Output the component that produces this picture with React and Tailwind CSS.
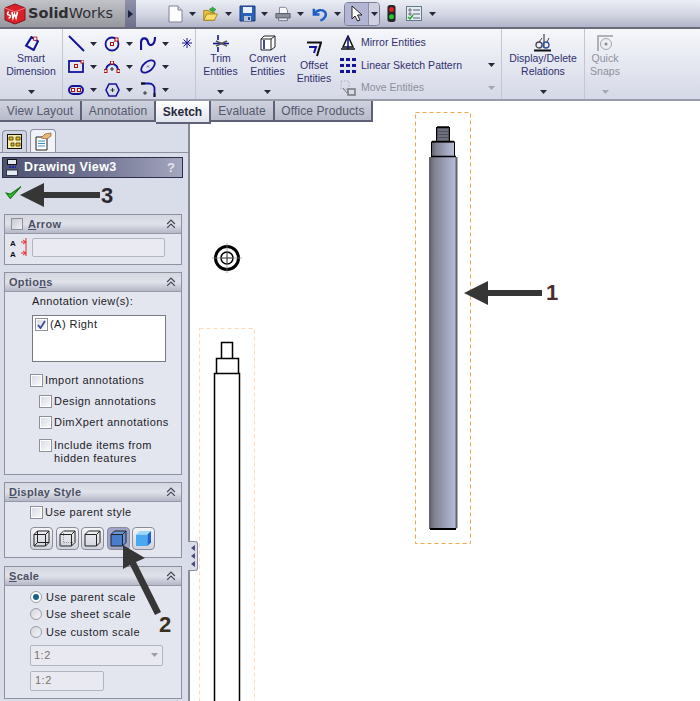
import { useId } from "react";

const font = "font-['Liberation_Sans',sans-serif]";

function Caret({ gray, className = "" }) {
  return (
    <svg width="7" height="4" viewBox="0 0 7 4" className={`shrink-0 ${className}`}>
      <path d="M0 0h7L3.5 4z" fill={gray ? "#a4a6b0" : "#26283c"} />
    </svg>
  );
}

function RibbonButton({ icon, lines, width, gray, caret = true, textTop = "-mt-[1px]" }) {
  return (
    <div className={`relative flex flex-col items-center h-full shrink-0 ${width}`}>
      <div className="h-[20px] mt-[4px] flex items-center justify-center">{icon}</div>
      <div className={`${textTop} text-center text-[10.5px] leading-[13px] whitespace-nowrap ${gray ? "text-[#8e909c]" : "text-[#2f3070]"}`}>
        {lines.map((l) => (
          <div key={l}>{l}</div>
        ))}
      </div>
      {caret && <Caret gray={gray} className="absolute top-[61px]" />}
    </div>
  );
}

function Tool({ children }) {
  return (
    <div className="flex items-center w-[36px] gap-[5px] h-[23px]">
      <div className="w-[18px] h-[18px] flex items-center justify-center">{children}</div>
      <Caret />
    </div>
  );
}

const blue = "#14149a";
const red = "#b01010";

const Handle = ({ x, y }) => <rect x={x} y={y} width="3" height="3" fill="#fff" stroke={red} strokeWidth="1" />;

function TopBar() {
  return (
    <div className="flex h-[29px] items-center bg-gradient-to-b from-[#eceef5] via-[#d5d8e4] to-[#b2b5c8] border-b-2 border-[#6a6c7c]">
      <div className="flex items-center h-full w-[125px] pl-[3px] gap-[1px] bg-gradient-to-b from-[#c2c3c8] to-[#97989f]">
        <svg width="24" height="22" viewBox="0 0 24 22">
          <path d="M2 5l10-4 10 4v12l-10 4-10-4z" fill="#d8222a" stroke="#8a1015" />
          <path d="M2 5l10 4 10-4" fill="none" stroke="#f08088" />
          <path d="M6 9c-2 0-2 3 0 3s2 3-.5 3M9 9l1 6 1.500-4 1.500 4 1.500-6" fill="none" stroke="#fff" strokeWidth="1.600" />
        </svg>
        <span className="font-['DejaVu_Sans',sans-serif] text-[14.5px] text-[#2e2e33] leading-none whitespace-nowrap">
          <b>Solid</b>Works
        </span>
      </div>
      <div className="w-[11px] h-full flex items-center justify-center bg-gradient-to-b from-[#8f90aa] to-[#6d6f8c]">
        <svg width="5" height="8" viewBox="0 0 5 8"><path d="M0 0l5 4-5 4z" fill="#1d2140" /></svg>
      </div>
      <div className="flex items-center ml-[32px] h-full">
        <svg width="15" height="18" viewBox="0 0 15 18"><path d="M1 1h9l4 4v12H1z" fill="#fdfdfd" stroke="#7d8296" /><path d="M10 1v4h4" fill="#d8dce8" stroke="#7d8296" /></svg>
        <Caret className="ml-[6px]" />
        <svg width="16" height="16" viewBox="0 0 21 18" preserveAspectRatio="none" className="ml-[7px]"><path d="M1 5h6l2 2h6v9H1z" fill="#e8c23c" stroke="#9a7a14" /><path d="M1 16l4-7h14l-4 7z" fill="#f8de70" stroke="#9a7a14" /><path d="M12 1l5 3-5 3V5H9V3h3z" fill="#3ab83a" stroke="#1c7a1c" strokeWidth=".7" /></svg>
        <Caret className="ml-[6px]" />
        <svg width="17" height="17" viewBox="0 0 17 17" className="ml-[7px]"><path d="M1 1h15v15H1z" fill="#2a62b8" stroke="#163a80" /><path d="M4 2h9v6H4z" fill="#e8f0fa" /><path d="M5 11h7v5H5z" fill="#b8c4d8" /><path d="M9 12h2v3H9z" fill="#24508f" /></svg>
        <Caret className="ml-[5px]" />
        <svg width="16" height="16" viewBox="0 0 18 17" className="ml-[7px]"><path d="M5 1h7l2 3v4H5z" fill="#f8f8fa" stroke="#7a7e8c" /><path d="M1 8h16v5H1z" fill="#8a8f9c" stroke="#555864" /><path d="M4 13h10v3H4z" fill="#e8e8ee" stroke="#6a6e7a" /></svg>
        <Caret className="ml-[6px]" />
        <svg width="17" height="16" viewBox="0 0 18 17" className="ml-[7px]"><path d="M3 3v6h6M3.500 8.500C6 4 12 3 15 6.500c2 3-.5 7.500-5 9" fill="none" stroke="#1c5cc8" strokeWidth="2.600" /></svg>
        <Caret className="ml-[6px]" />
        <div className="flex ml-[3px] h-[24px] w-[36px] rounded-[4px] border border-[#7c7e98] overflow-hidden">
          <div className="w-[23px] bg-[#b2b5d4] flex items-center justify-center">
            <svg width="12" height="17" viewBox="0 0 12 17"><path d="M1 1v13l3-3 2.500 5 2.500-1-2.500-5H11z" fill="#fff" stroke="#222" /></svg>
          </div>
          <div className="flex-1 bg-[#cfd1e2] border-l border-[#8c8ea6] flex items-center justify-center"><Caret /></div>
        </div>
        <svg width="9" height="17" viewBox="0 0 9 19" className="ml-[7px]"><rect width="9" height="19" rx="3" fill="#24262a" /><circle cx="4.500" cy="5" r="2.800" fill="#e02424" /><circle cx="4.500" cy="13" r="2.800" fill="#2cc42c" /></svg>
        <svg width="16" height="15" viewBox="0 0 16 15" className="ml-[10px]"><rect x=".5" y=".5" width="15" height="14" fill="#e4ecf4" stroke="#64788c" /><path d="M3 3h2v2H3zM3 7h2v2H3z" fill="none" stroke="#555" strokeWidth=".8" /><path d="M7 4h7M7 8h7M7 12h7" stroke="#56606c" /><path d="M2 11l2 2 3-4" fill="none" stroke="#22a022" strokeWidth="1.400" /></svg>
        <Caret className="ml-[7px]" />
      </div>
    </div>
  );
}

function Ribbon() {
  return (
    <div className={`flex h-[72px] bg-gradient-to-b from-[#f6f7fb] to-[#d5d8e6] border-b-2 border-[#9a9caa] ${font}`}>
      <RibbonButton
        width="w-[62px]"
        lines={["Smart", "Dimension"]}
        icon={<svg width="15" height="15" viewBox="0 0 14 14"><path d="M7 1l6 4-4 8-7-4z" fill="none" stroke={blue} strokeWidth="2" /><rect x="9" y="1" width="3" height="3" fill="#fff" stroke={red} strokeWidth=".8" /></svg>}
      />
      <div className="w-[133px] border-l border-[#c4c6d4] pl-[4px] pt-[3px] shrink-0 flex">
        <div className="grid grid-cols-3 gap-x-0 w-[108px]">
          <Tool><svg width="17" height="17" viewBox="0 0 17 17"><path d="M1 1l15 15" stroke={blue} strokeWidth="2" /></svg></Tool>
          <Tool><svg width="16" height="16" viewBox="0 0 16 16"><circle cx="8" cy="8" r="6.500" fill="none" stroke={blue} strokeWidth="1.800" /><path d="M8 8l4-4" stroke="#555" strokeWidth=".7" /><Handle x="6.500" y="6.500" /><Handle x="11" y="2" /></svg></Tool>
          <Tool><svg width="17" height="15" viewBox="0 0 17 15"><path d="M1 14V7c0-6 6-6 7-1s7 4 7-5" fill="none" stroke={blue} strokeWidth="2.200" /></svg></Tool>
          <Tool><svg width="16" height="13" viewBox="0 0 16 13"><rect x="1" y="1" width="14" height="11" fill="none" stroke={blue} strokeWidth="1.800" /><Handle x="6.500" y="4.500" /><Handle x="13" y="0" /></svg></Tool>
          <Tool><svg width="16" height="12" viewBox="0 0 16 12"><path d="M2 9a6 6 0 0 1 12 0" fill="none" stroke={blue} strokeWidth="1.800" /><path d="M8 6v4M6 8h4" stroke="#333" /><Handle x="0" y="8.500" /><Handle x="13" y="8.500" /><Handle x="6.500" y="0" /></svg></Tool>
          <Tool><svg width="16" height="15" viewBox="0 0 16 15"><ellipse cx="8" cy="7.500" rx="8" ry="4.500" transform="rotate(-40 8 7.500)" fill="none" stroke={blue} strokeWidth="1.800" /><path d="M7 6.500l2 2m0-2l-2 2" stroke="#444" strokeWidth=".7" /></svg></Tool>
          <Tool><svg width="16" height="10" viewBox="0 0 16 10"><rect x="1" y="1" width="14" height="8" rx="4" fill="none" stroke={blue} strokeWidth="2" /><Handle x="3.500" y="3.500" /><Handle x="9.500" y="3.500" /></svg></Tool>
          <Tool><svg width="15" height="14" viewBox="0 0 15 14"><path d="M4 1h7l3 6-3 6H4L1 7z" fill="none" stroke={blue} strokeWidth="1.600" /><path d="M7.500 5v4M5.500 7h4" stroke="#333" /></svg></Tool>
          <Tool><svg width="16" height="15" viewBox="0 0 16 15"><path d="M1 1.500h8c3.500 0 5.500 2.500 5.500 5.500v8" fill="none" stroke={blue} strokeWidth="1.800" /><path d="M1 1.500h4M14.500 11v4" stroke="#111" strokeWidth="1.800" /><path d="M5 9v4M3 11h4" stroke="#333" /></svg></Tool>
        </div>
        <svg width="10" height="10" viewBox="0 0 10 10" className="ml-[7px] mt-[6px]"><path d="M5 0v10M0 5h10M1.500 1.500l7 7m0-7l-7 7" stroke={blue} /></svg>
      </div>
      <div className="w-[306px] border-l border-[#c4c6d4] shrink-0 flex">
        <RibbonButton
          width="w-[49px]"
          lines={["Trim", "Entities"]}
          icon={<svg width="16" height="17" viewBox="0 0 16 17"><path d="M0 8.500h16" stroke={blue} strokeWidth="1.600" /><path d="M5 0v5M5 12v5" stroke={blue} strokeWidth="1.600" /><path d="M3 6l11 5M3 11l11-5" stroke="#555" strokeWidth="1.400" /></svg>}
        />
        <RibbonButton
          width="w-[45px]"
          lines={["Convert", "Entities"]}
          icon={<svg width="16" height="16" viewBox="0 0 16 16"><path d="M1 4h10v11H1zM1 4l3-3h11v11l-4 3M11 4l4-3" fill="#fff" stroke="#222" /><path d="M4 5v9" stroke={blue} strokeWidth="1.600" /></svg>}
        />
        <RibbonButton
          width="w-[48px]"
          caret={false}
          textTop="mt-[6px]"
          lines={["Offset", "Entities"]}
          icon={<svg width="16" height="16" className="mt-[12px]" viewBox="0 0 16 16"><path d="M1 1.500h14L11 15" fill="none" stroke="#111" strokeWidth="2" /><path d="M3 6h7L8 12" fill="none" stroke={blue} strokeWidth="2" /></svg>}
        />
        <div className="flex flex-col pt-[3px] pl-[2px] text-[10.5px] text-[#2f3070] w-[155px] shrink-0">
          <div className="flex items-center h-[23px] gap-[5px]">
            <svg width="16" height="16" viewBox="0 0 16 16"><path d="M8 1l5 11H3z" fill="#fff" stroke="#111" strokeWidth="1.500" /><path d="M8 1v13" stroke={blue} strokeWidth="1.600" /><path d="M1 14h14" stroke="#111" strokeWidth="1.500" /></svg>
            <span className="whitespace-nowrap">Mirror Entities</span>
          </div>
          <div className="flex items-center h-[23px] gap-[5px] relative">
            <svg width="16" height="15" viewBox="0 0 16 15" fill={blue}><path d="M0 0h4v3H0zM6 0h4v3H6zM12 0h4v3h-4zM0 6h4v3H0zM6 6h4v3H6zM12 6h4v3h-4zM0 12h4v3H0zM6 12h4v3H6zM12 12h4v3h-4z" /></svg>
            <span className="whitespace-nowrap">Linear Sketch Pattern</span>
            <Caret className="absolute left-[148px]" />
          </div>
          <div className="flex items-center h-[23px] gap-[5px] relative text-[#8e909c]">
            <svg width="16" height="16" viewBox="0 0 16 16"><path d="M1 1h8v8H1z" fill="none" stroke="#a8aab4" strokeDasharray="1.500 1.500" /><path d="M3 8l4 5" stroke="#777" /><path d="M8 9h7v6H8z" fill="none" stroke="#777" strokeWidth="1.500" /></svg>
            <span className="whitespace-nowrap">Move Entities</span>
            <Caret gray className="absolute left-[148px]" />
          </div>
        </div>
      </div>
      <div className="w-[83px] border-l border-[#c4c6d4] shrink-0">
        <RibbonButton
          width="w-full"
          lines={["Display/Delete", "Relations"]}
          icon={<svg width="18" height="18" viewBox="0 0 18 18"><path d="M0 16.500h17" stroke="#111" strokeWidth="2" /><path d="M10 0v14" stroke="#222" /><circle cx="5" cy="11" r="3" fill="none" stroke="#445" strokeWidth="1.300" /><circle cx="12" cy="11" r="3" fill="none" stroke="#3050a0" strokeWidth="1.300" /><path d="M5 8l3-4M13 8l2-4" stroke="#444" /></svg>}
        />
      </div>
      <div className="w-[41px] border-l border-[#c4c6d4] shrink-0">
        <RibbonButton
          width="w-full"
          gray
          lines={["Quick", "Snaps"]}
          icon={<svg width="17" height="17" viewBox="0 0 17 17"><path d="M1 16V1h15" fill="none" stroke="#9a9ca6" strokeWidth="1.500" /><circle cx="9" cy="9" r="5.500" fill="#eceef2" stroke="#a4a6b0" /><circle cx="9" cy="9" r="1.500" fill="#888a94" /></svg>}
        />
      </div>
    </div>
  );
}

function Tabs() {
  const tab = "h-[21px] flex items-center justify-center bg-gradient-to-b from-[#cfd2df] to-[#b8bbca] border-r-2 border-b-2 border-[#5f6276] text-[12px] text-[#55586c] tracking-[0.1px] shrink-0";
  return (
    <div className={`absolute left-0 top-[101px] flex h-[23px] ${font}`}>
      <div className={`${tab} w-[82px]`}>View Layout</div>
      <div className={`${tab} w-[74px]`}>Annotation</div>
      <div className="h-[23px] w-[55px] flex items-center justify-center bg-gradient-to-b from-[#ffffff] to-[#e2e4ee] border-r-2 border-b-2 border-[#5f6276] text-[12px] font-bold text-[#26283c] shrink-0">Sketch</div>
      <div className={`${tab} w-[64px]`}>Evaluate</div>
      <div className={`${tab} w-[98px]`}>Office Products</div>
    </div>
  );
}

function Check({ label, checked, className = "", top = false }) {
  return (
    <div className={`flex ${top ? "items-start" : "items-center"} gap-[2px] ${className}`}>
      <span className="w-[13px] h-[13px] shrink-0 border border-[#8d8f99] bg-gradient-to-br from-[#d8dae2] to-[#fbfbfd] flex items-center justify-center outline outline-1 outline-offset-[-2px] outline-white">
        {checked && (
          <svg width="9" height="9" viewBox="0 0 9 9"><path d="M1 5l2.500 3L8 1" fill="none" stroke="#3a4a9a" strokeWidth="1.800" /></svg>
        )}
      </span>
      <span className="text-[11px] leading-[13px] tracking-[0.45px] text-[#1c1c28] whitespace-pre-line">{label}</span>
    </div>
  );
}

function Radio({ label, checked }) {
  return (
    <div className="flex items-center gap-[3px] h-[17.500px]">
      <span className={`w-[12px] h-[12px] rounded-full border border-[#9a9ca6] flex items-center justify-center ${checked ? "bg-white" : "bg-gradient-to-br from-[#d4d6de] to-[#f6f6fa]"}`}>
        {checked && <span className="w-[6px] h-[6px] rounded-full bg-[#16608c]" />}
      </span>
      <span className="text-[11px] tracking-[0.45px] text-[#1c1c28] whitespace-nowrap ml-[1px]">{label}</span>
    </div>
  );
}

function Group({ title, height, className = "", children, check }) {
  const first = title[0];
  const underline = title === "Options" ? null : first;
  return (
    <div className={`ml-[4px] mr-[6px] border border-[#8f919f] bg-[#e4e6ef] ${height} ${className}`}>
      <div className="h-[19px] flex items-center justify-between pl-[4px] pr-[5px] bg-gradient-to-b from-[#d4d6e0] via-[#e0e2ea] to-[#b4b7c6] border-b border-[#9597a6]">
        <div className="flex items-center gap-[5px]">
          {check && (
            <span className="w-[12px] h-[12px] ml-[2px] border border-[#8d8f99] bg-gradient-to-br from-[#c8cad4] to-[#f0f0f4]" />
          )}
          <span className="text-[11px] font-bold text-[#4c5064] tracking-[0.3px]">
            {underline ? (
              <>
                <u>{underline}</u>
                {title.slice(1)}
              </>
            ) : (
              <>
                Optio<u>n</u>s
              </>
            )}
          </span>
        </div>
        <svg width="10" height="10" viewBox="0 0 9 9"><path d="M1 4.500l3.500-3.500L8 4.500M1 8l3.500-3.500L8 8" fill="none" stroke="#444658" strokeWidth="1.100" /></svg>
      </div>
      {children}
    </div>
  );
}

function StyleBtn({ active, children }) {
  return (
    <div className={`w-[23px] h-[23px] rounded-[4px] border border-[#8a8c98] flex items-center justify-center ${active ? "bg-[#9fa4c8] border-[#6a6e90]" : "bg-gradient-to-b from-[#f4f4f8] to-[#d0d2dc]"}`}>
      {children}
    </div>
  );
}

function Panel() {
  return (
    <div className={`relative w-[190px] shrink-0 h-[600px] overflow-hidden pt-[22px] bg-[#d9dce9] border-r-2 border-[#8a8c9a] ${font}`}>
      <div className="flex items-end h-[30px] pl-[2px] gap-[3px] border-b border-[#8f919f]">
        <div className="w-[25px] h-[22px] rounded-t-[4px] border border-b-0 border-[#8f919f] bg-[#d0d3e2] flex items-center justify-center">
          <svg width="15" height="15" viewBox="0 0 15 15"><rect x=".5" y=".5" width="14" height="14" fill="#f6e9a0" stroke="#111" /><path d="M2 3h4v3H2zM9 3h4v3H9zM9 9h4v3H9zM4 9h3v3H4z" fill="#e8b818" stroke="#222" strokeWidth=".7" /></svg>
        </div>
        <div className="w-[26px] h-[23px] rounded-t-[4px] border border-b-0 border-[#8f919f] bg-[#f2f3f8] flex items-center justify-center">
          <svg width="20" height="19" viewBox="0 0 20 19"><path d="M3 5h11v13H3z" fill="#fff" stroke="#222" /><path d="M5 9h7M5 11.500h7M5 14h7" stroke="#3a8ccc" /><path d="M8 6l4-4 6-1v3l-4 3z" fill="#e8b878" stroke="#8a5a28" strokeWidth=".7" /></svg>
        </div>
      </div>
      <div className="mt-[4px] ml-[2px] mr-[5px] h-[21px] flex items-center bg-gradient-to-r from-[#4e5170] via-[#6f7290] to-[#a5a7bf] border border-[#2c2e4a] pl-[3px] pr-[7px] justify-between">
        <div className="flex items-center gap-[5px]">
          <svg width="13" height="17" viewBox="0 0 13 17"><rect x="1.500" y=".5" width="9" height="5" fill="#e4e8f0" stroke="#111" /><path d="M3 8h7" stroke="#2222aa" strokeDasharray="2 1" strokeWidth="2" /><rect x=".5" y="11" width="11" height="5.500" fill="#e4ecf8" stroke="#334" /></svg>
          <span className="text-[12.5px] font-bold text-white tracking-[0.35px]">Drawing View3</span>
        </div>
        <span className="text-[13px] font-bold text-[#e4e4ec]">?</span>
      </div>
      <div className="h-[36px] pl-[5px] pt-[7px]">
        <svg width="17" height="15" viewBox="0 0 16 13"><path d="M1 7l4 5L15 1 5 8z" fill="#32c42c" stroke="#147814" /></svg>
      </div>
      <Group title="Arrow" check height="h-[51px]">
        <div className="flex pt-[4px] pl-[5px] gap-[4px]">
          <svg width="18" height="20" viewBox="0 0 18 20"><path d="M11 4h5M11 15h5M13 2l3 2-3 2M13 13l3 2-3 2M16 0v18" fill="none" stroke="#e01818" strokeWidth=".9" /><text x="0" y="7.500" fontSize="8" fontWeight="700" fill="#111" fontFamily="Liberation Sans">A</text><text x="0" y="18.500" fontSize="8" fontWeight="700" fill="#111" fontFamily="Liberation Sans">A</text></svg>
          <div className="w-[133px] h-[19px] rounded-[2px] border border-[#b2b4c0] bg-[#eaebf2]" />
        </div>
      </Group>
      <Group title="Options" height="h-[203px]" className="mt-[7px]">
        <div className="pl-[27px] pt-[3px] text-[11px] leading-[13px] tracking-[0.4px] text-[#1c1c28]">Annotation view(s):</div>
        <div className="ml-[27px] mt-[7px] w-[134px] h-[47px] border border-[#777986] bg-white pl-[2px] pt-[2px]">
          <Check label="(A) Right" checked />
        </div>
        <Check label="Import annotations" className="ml-[25px] mt-[12px]" />
        <Check label="Design annotations" className="ml-[34px] mt-[8px]" />
        <Check label="DimXpert annotations" className="ml-[34px] mt-[8px]" />
        <Check label={"Include items from\nhidden features"} top className="ml-[34px] mt-[10px]" />
      </Group>
      <Group title="Display Style" height="h-[76px]" className="mt-[7px]">
        <Check label="Use parent style" className="ml-[25px] mt-[4px]" />
        <div className="flex ml-[25px] mt-[8px] gap-[2.500px]">
          <StyleBtn><svg width="17" height="17" viewBox="0 0 17 17" fill="none" stroke="#222"><path d="M1 4.500h11.500V16H1zM4.500 1H16v11.500H4.500zM1 4.500L4.500 1M12.500 4.500L16 1M12.500 16l3.500-3.500M1 16l3.500-3.500" /></svg></StyleBtn>
          <StyleBtn><svg width="17" height="17" viewBox="0 0 17 17" fill="none" stroke="#222"><path d="M1 4.500h11.500V16H1zM1 4.500L4.500 1H16v11.500L12.500 16M12.500 4.500L16 1" /><path d="M4.500 1v11.500H16M4.500 12.500L1 16" stroke="#999" strokeDasharray="1 1" /></svg></StyleBtn>
          <StyleBtn><svg width="17" height="17" viewBox="0 0 17 17" fill="none" stroke="#222"><path d="M1 4.500h11.500V16H1zM1 4.500L4.500 1H16v11.500L12.500 16M12.500 4.500L16 1" /></svg></StyleBtn>
          <StyleBtn active><svg width="17" height="17" viewBox="0 0 17 17"><path d="M1 4.500h11.500V16H1z" fill="#4a7ccc" stroke="#222" /><path d="M1 4.500L4.500 1H16v11.500L12.500 16V4.500z" fill="#6a94d8" stroke="#222" /><path d="M12.500 4.500L16 1" stroke="#222" /></svg></StyleBtn>
          <StyleBtn><svg width="17" height="17" viewBox="0 0 17 17"><path d="M1 4.500h11.500V16H1z" fill="#4aa8f0" /><path d="M1 4.500L4.500 1H16L12.500 4.500z" fill="#a0d8fa" /><path d="M12.500 4.500L16 1v11.500L12.500 16z" fill="#1c62c8" /></svg></StyleBtn>
        </div>
      </Group>
      <Group title="Scale" height="h-[133px]" className="mt-[8px]">
        <div className="pl-[25px] pt-[2px]">
          <Radio label="Use parent scale" checked />
          <Radio label="Use sheet scale" />
          <Radio label="Use custom scale" />
          <div className="mt-[4px] w-[133px] h-[21px] rounded-[2px] border border-[#b2b4c0] bg-[#e9eaf1] flex items-center justify-between pl-[3px] pr-[4px]">
            <span className="text-[11px] tracking-[0.5px] text-[#7c7268]">1:2</span>
            <svg width="7" height="4" viewBox="0 0 7 4"><path d="M0 0h7L3.500 4z" fill="#9c9ea8" /></svg>
          </div>
          <div className="mt-[5px] w-[74px] h-[20px] rounded-[2px] border border-[#b2b4c0] bg-[#e9eaf1] flex items-center pl-[4px]">
            <span className="text-[11px] tracking-[0.5px] text-[#7c7268]">1:2</span>
          </div>
        </div>
      </Group>
    </div>
  );
}

function Canvas() {
  const id = useId();
  return (
    <div className="relative flex-1 h-[600px] overflow-hidden bg-white">
      {/* drawing sheet, origin shifted by the panel and the ribbon */}
      <svg width="510" height="600" viewBox="190 101 510 600" className="block">
        <defs>
          <linearGradient id={id} x1="0" x2="1" y1="0" y2="0">
            <stop offset="0" stopColor="#5c5e6c" />
            <stop offset="0.2" stopColor="#808290" />
            <stop offset="0.65" stopColor="#a2a6be" />
            <stop offset="1" stopColor="#b8bedc" />
          </linearGradient>
        </defs>
        <rect x="415.500" y="112.500" width="55" height="431" fill="none" stroke="#f5a44e" strokeDasharray="4 3" />
        <rect x="199.500" y="328.500" width="55" height="380" fill="none" stroke="#ffd8b8" strokeDasharray="4 3" />
        <rect x="429" y="157" width="28" height="372" fill={`url(#${id})`} />
        <path d="M430 157v371M456.500 157v371" stroke="#62646e" strokeWidth="2" fill="none" />
        <rect x="430" y="528" width="26" height="2" fill="#000" />
        <rect x="431.500" y="142" width="23" height="14.500" fill={`url(#${id})`} stroke="#000" />
        <path d="M431 156.500h25M432 141.500h22" stroke="#000" strokeWidth="1.500" />
        <rect x="436.500" y="127.500" width="13" height="14" fill="#50525e" stroke="#000" />
        <path d="M437 127h12" stroke="#000" strokeWidth="1.500" />
        <path d="M438 130h10M438 133h10M438 136h10M438 139h10" stroke="#8c8e9c" />

        <path d="M214.500 701V373.500h25V701M216.500 373V358.500h22V373M221.500 358V342.500h11V358" fill="none" stroke="#000" strokeWidth="1.500" />

        <circle cx="227" cy="258" r="11.500" fill="none" stroke="#000" strokeWidth="3" />
        <circle cx="227" cy="258" r="6" fill="none" stroke="#000" strokeWidth="1.500" />
        <path d="M227 243v30M212 258h30" stroke="#888" strokeWidth=".7" />
        <path d="M227 252v12M221 258h12" stroke="#333" strokeWidth=".8" />
      </svg>
    </div>
  );
}

export default function App() {
  return (
    <div className="relative w-[700px] h-[701px] overflow-hidden bg-white">
      <TopBar />
      <Ribbon />
      <div className="flex">
        <Panel />
        <Canvas />
      </div>
      <Tabs />

      {/* sash handle on the panel edge */}
      <div className="absolute left-[188px] top-[541px] w-[10px] h-[30px] rounded-r-[3px] bg-[#d9dce9] border border-l-0 border-[#8a8c9a] flex flex-col items-center justify-center gap-[2px]">
        {[0, 1, 2].map((i) => (
          <svg key={i} width="4" height="6" viewBox="0 0 4 6"><path d="M4 0v6L0 3z" fill="#4a4c80" /></svg>
        ))}
      </div>

      {/* callout arrows laid over the screenshot */}
      <svg width="700" height="701" className="absolute left-0 top-0 pointer-events-none">
        <path d="M20 195l24-12v9h56v6H44v9z" fill="#363636" />
        <path d="M464 293l24-12v9h54v6h-54v9z" fill="#363636" />
        <path d="M123 545l22 13-9 4 25 50-6 3-25-50-7 4z" fill="#363636" />
      </svg>
      <span className={`absolute left-[101px] top-[185px] text-[22px] leading-[22px] font-bold text-[#2a2a30] ${font}`}>3</span>
      <span className={`absolute left-[546px] top-[282px] text-[22px] leading-[22px] font-bold text-[#4a2c2c] ${font}`}>1</span>
      <span className={`absolute left-[159px] top-[614px] text-[22px] leading-[22px] font-bold text-[#3a3020] ${font}`}>2</span>
    </div>
  );
}
